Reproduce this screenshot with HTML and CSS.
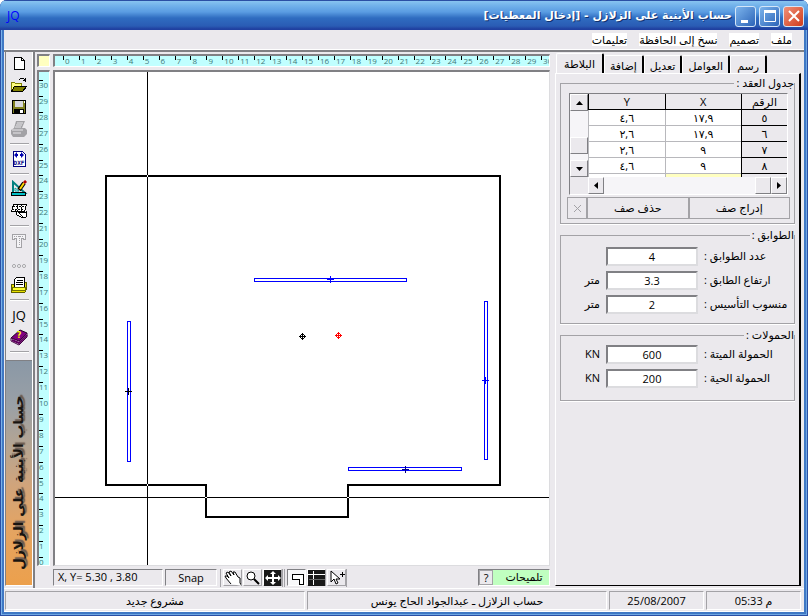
FILE: index.html
```html
<!DOCTYPE html>
<html lang="ar">
<head>
<meta charset="utf-8">
<title>حساب الأبنية على الزلازل</title>
<link rel="stylesheet" href="styles.css">
</head>
<body>
<div class="window">
  <header class="titlebar">
    <span class="app-icon">JQ</span>
    <h1 class="title" dir="rtl">حساب الأبنية على الزلازل - [إدخال المعطيات]</h1>
    <button class="win-btn" aria-label="تصغير"><svg width="20" height="20"><path d="M5 14h7v3H5z" fill="#fff"/></svg></button>
    <button class="win-btn" aria-label="تكبير"><svg width="20" height="20"><path d="M4.500 5.500h11v10h-11zM4 6.500h12" fill="none" stroke="#fff" stroke-width="1"/><path d="M4 4h12v3H4z" fill="#fff"/></svg></button>
    <button class="win-btn close" aria-label="إغلاق"><svg width="20" height="20"><path d="M5 5l10 10M15 5L5 15" stroke="#fff" stroke-width="2"/></svg></button>
  </header>
  <div class="frame">
    <nav class="menu" dir="rtl">
      <a href="#">ملف</a><a href="#">تصميم</a><a href="#">نسخ إلى الحافظة</a><a href="#">تعليمات</a>
    </nav>
    <main class="main">
      <aside class="tools">
        <button aria-label="جديد"><svg width="18" height="18" class="px"><path d="M4.500 3.500h7l3 3v9h-10z" fill="#fff" stroke="#000"/><path d="M11.500 3v3.500H15" fill="none" stroke="#000"/></svg></button>
        <button aria-label="فتح"><svg width="18" height="18" class="px"><path d="M1.500 15.500v-9h3l1 1h6v3" fill="#ffff80" stroke="#808000"/><path d="M1.500 15.500l3-5h12l-4 5z" fill="#808000" stroke="#000"/><path d="M9 3.500c2-2 5-2 6 1M13 4.500h3M15.500 2v4" fill="none" stroke="#000"/></svg></button>
        <button aria-label="حفظ"><svg width="18" height="18" class="px"><path d="M2.500 2.500h13v13h-13z" fill="#808020" stroke="#000"/><path d="M5 3h8v6H5z" fill="#d8d8dc"/><path d="M4 11h10v5H4z" fill="#000"/><path d="M10 12h3v3h-3zM14 3h1v2h-1z" fill="#fff"/></svg></button>
        <button disabled aria-label="طباعة"><svg width="18" height="18"><path d="M6 1h9l-3 7h3l2 2v4l-3 3H3l-2-3v-4l3-2z" fill="#a3a2a6"/><path d="M7 3h6M6 5h6M5 7h6M2 10h11M3 13h8" stroke="#e8e6ea"/></svg></button>
        <hr>
        <button aria-label="DXF"><svg width="18" height="18"><path class="px" d="M3.500 1.500h9l3 3v12h-12z" fill="#fff" stroke="#000080"/><path d="M4 5l3-3v2h1v2H7v2zM14 5l-3-3v2h-1v2h1v2z" fill="#0000b0"/><text x="9" y="15" class="dxf">DXF</text></svg></button>
        <hr>
        <button aria-label="رسم"><svg width="18" height="18"><path d="M3 2v11h12z" fill="none" stroke="#008080" stroke-width="2"/><path d="M5 8v3h4z" fill="#fff" stroke="#00a0a0"/><path class="px" d="M1.500 12.500h14v3h-14z" fill="#00c0c8" stroke="#000"/><path d="M9 10l5-7" stroke="#000" stroke-width="4"/><path d="M10 9l4-6" stroke="#ffd800" stroke-width="2"/><path d="M14 1l2 2" stroke="#b00000" stroke-width="3"/></svg></button>
        <button aria-label="جدول"><svg width="18" height="18" class="px"><path d="M3.500 2.500h13l-2 7h-13z" fill="#fff" stroke="#000"/><path d="M3 4.500h12M2 7.500h12M7.500 2v7M11.500 2v7" stroke="#000" stroke-dasharray="2 1"/><path d="M6 9l4 2 6-1v5l-3 1-6-3z" fill="#fff" stroke="#000"/><path d="M8 10l6 6" stroke="#000"/></svg></button>
        <hr>
        <button disabled aria-label="نص"><svg width="18" height="18" class="px"><path d="M2.500 2.500h13v5h-2v-1h-2v9h-5v-9h-2v1h-2z" fill="#f4f3f6" stroke="#a3a2a6"/><path d="M4 4.500h10M9.500 4v10" stroke="#a3a2a6" stroke-dasharray="1 1"/></svg></button>
        <button disabled aria-label="المزيد"><svg width="18" height="18"><g fill="#fff" stroke="#a3a2a6"><circle cx="4" cy="12" r="1.500"/><circle cx="9" cy="12" r="1.500"/><circle cx="14" cy="12" r="1.500"/></g></svg></button>
        <button aria-label="تقرير"><svg width="18" height="18" class="px"><path d="M1.500 8.500h3v-2h12v7l-2 3h-13z" fill="#e8e000" stroke="#606000"/><path d="M6.500 1.500h8v10h-10v-8z" fill="#fff" stroke="#000"/><path d="M7 4.500h6M6 6.500h7M6 8.500h7" stroke="#000"/><path d="M2 11.500h13v3H2z" fill="#ffff30" stroke="#707000"/></svg></button>
        <hr>
        <button class="jq">JQ</button>
        <button aria-label="مساعدة"><svg width="18" height="18"><path d="M1 10l9-8 7 3-8 8z" fill="#800080" stroke="#200020"/><path d="M1 10l8 3 8-8v4l-8 8-8-4z" fill="#fff" stroke="#400040"/><path d="M2 12l7 3 8-8" fill="none" stroke="#600060" stroke-width="2"/><text x="9" y="10" class="help">?</text></svg></button>
        <hr>
        <div class="banner"><svg width="100%" height="100%" viewBox="0 0 26 228"><text transform="translate(17 124) rotate(-90)" class="calligraphy">حساب الأبنية على الزلازل</text></svg></div>
      </aside>

      <section class="workspace">
        <div class="corner"></div>
        <div class="ruler-x"><ol>
          <li>0</li><li>1</li><li>2</li><li>3</li><li>4</li><li>5</li><li>6</li><li>7</li><li>8</li><li>9</li><li>10</li><li>11</li><li>12</li><li>13</li><li>14</li><li>15</li><li>16</li><li>17</li><li>18</li><li>19</li><li>20</li><li>21</li><li>22</li><li>23</li><li>24</li><li>25</li><li>26</li><li>27</li><li>28</li><li>29</li><li>30</li>
        </ol></div>
        <div class="ruler-y"><ol>
          <li>30</li><li>29</li><li>28</li><li>27</li><li>26</li><li>25</li><li>24</li><li>23</li><li>22</li><li>21</li><li>20</li><li>19</li><li>18</li><li>17</li><li>16</li><li>15</li><li>14</li><li>13</li><li>12</li><li>11</li><li>10</li><li>9</li><li>8</li><li>7</li><li>6</li><li>5</li><li>4</li><li>3</li><li>2</li><li>1</li><li>0</li>
        </ol></div>
        <div class="canvas">
          <svg width="100%" height="100%" class="px">
            <defs>
              <path id="plus" d="M-3 .5h7M.5-3v7"/>
              <g id="target"><path d="M-3 .5h7M.5-3v7"/><path d="M-1-2h3v1h1v3h-1v1h-3v-1h-1v-3h1zM-1-1v3h3v-3z" fill-rule="evenodd" stroke="none"/></g>
            </defs>
            <g transform="translate(-55 -72)" fill="none">
              <path d="M106 176H500V485H348V517H206V485H106z" stroke="#000" stroke-width="2"/>
              <path d="M147.500 60V580M40 497.500H570" stroke="#000"/>
              <path d="M205 497.500h2M347 497.500h2M147.500 175v2M147.500 484v2" stroke="#fff"/>
              <g stroke="#00f">
                <rect x="254.500" y="278.500" width="152" height="3"/>
                <rect x="484.500" y="301.500" width="3" height="158"/>
                <rect x="348.500" y="467.500" width="113" height="3"/>
                <rect x="127.500" y="321.500" width="3" height="140"/>
                <use href="#plus" x="330" y="279"/><use href="#plus" x="485" y="380"/>
              </g>
              <use href="#plus" x="405" y="469" stroke="#000080"/>
              <use href="#plus" x="128" y="391" stroke="#000"/>
              <use href="#target" x="302" y="336" stroke="#000" fill="#000"/>
              <use href="#target" x="338" y="335" stroke="#f00" fill="#f00"/>
            </g>
          </svg>
        </div>
        <div class="bottombar">
          <output class="coords">X, Y= 5.30 , 3.80</output>
          <button class="snap">Snap</button>
          <div class="view-tools">
            <button aria-label="تحريك"><svg width="18" height="16"><path d="M7 14L2 8l-1-2 2 0 2 2-3-5 2-1 3 4-2-4 2-1 3 4-1-3h2l3 5 2 1v5l2 3" fill="#fff" stroke="#000"/></svg></button>
            <button aria-label="تكبير الرسم"><svg width="18" height="16"><circle cx="7" cy="6" r="4" fill="#fff" stroke="#000"/><path d="M10 9l5 5" stroke="#000" stroke-width="2"/></svg></button>
            <button class="dark" aria-label="ملاءمة"><svg width="18" height="16"><path d="M9 1l3 3h-2v3h4V5l3 3-3 3V9h-4v3h2l-3 3-3-3h2V9H4v2L1 8l3-3v2h4V4H6z" fill="#fff"/></svg></button>
          </div>
          <div class="view-tools">
            <button class="pressed" aria-label="بلاطة"><svg width="18" height="16" class="px"><path d="M4.500 4.500h11v10h-4v-5h-7z" fill="#fff" stroke="#000" stroke-width="1"/></svg></button>
            <button class="dark" aria-label="شبكة"><svg width="18" height="16" class="px"><path d="M0 4.500h18M5.500 1v14" stroke="#fff"/><path d="M1 9.500h16" stroke="#666"/></svg></button>
            <button aria-label="تحديد"><svg width="18" height="16"><path d="M3 1v11l3-3 2 5 2-1-2-4h4z" fill="#fff" stroke="#000"/><path class="px" d="M12 4.500h5M14.500 2v5" stroke="#000"/></svg></button>
          </div>
          <div class="hints"><button aria-label="مساعدة">?</button><span>تلميحات</span></div>
        </div>
      </section>

      <section class="side">
        <div class="tabs" role="tablist">
          <button role="tab" class="active" aria-selected="true">البلاطة</button><button role="tab">إضافة</button><button role="tab">تعديل</button><button role="tab">العوامل</button><button role="tab">رسم</button>
        </div>
        <div class="page">
          <fieldset dir="rtl" class="nodes">
            <legend>جدول العقد :</legend>
            <div class="grid-view" dir="ltr">
              <div class="vscroll">
                <button aria-label="أعلى"><svg width="7" height="4"><path d="M0 4l3.500-4L7 4z"/></svg></button>
                <span class="track upper"></span>
                <span class="thumb"></span>
                <span class="track lower"></span>
                <button aria-label="أسفل"><svg width="7" height="4"><path d="M0 0l3.500 4L7 0z"/></svg></button>
              </div>
              <div class="rows">
                <table dir="rtl">
                  <thead><tr><th class="num">الرقم</th><th>X</th><th>Y</th></tr></thead>
                  <tbody>
                    <tr><th>٥</th><td>١٧,٩</td><td>٤,٦</td></tr>
                    <tr><th>٦</th><td>١٧,٩</td><td>٢,٦</td></tr>
                    <tr><th>٧</th><td>٩</td><td>٢,٦</td></tr>
                    <tr><th>٨</th><td>٩</td><td>٤,٦</td></tr>
                    <tr><th></th><td class="new"></td><td></td></tr>
                  </tbody>
                </table>
              </div>
              <div class="hscroll">
                <button aria-label="يسار"><svg width="4" height="7"><path d="M4 0L0 3.500 4 7z"/></svg></button>
                <span class="track"></span>
                <span class="thumb"></span>
                <button aria-label="يمين"><svg width="4" height="7"><path d="M0 0l4 3.500L0 7z"/></svg></button>
              </div>
            </div>
            <div class="actions" dir="ltr">
              <button disabled class="clear" aria-label="مسح"><svg width="9" height="9"><path d="M1 1l7 7M8 1L1 8" stroke="#a3a2a6"/></svg></button>
              <button>حذف صف</button>
              <button>إدراج صف</button>
            </div>
          </fieldset>
          <fieldset dir="rtl" class="storeys">
            <legend>الطوابق :</legend>
            <div class="field" dir="ltr"><span class="unit"></span><input id="count" value="4"><label for="count" dir="rtl">عدد الطوابق :</label></div>
            <div class="field" dir="ltr"><span class="unit">متر</span><input id="height" value="3.3"><label for="height" dir="rtl">ارتفاع الطابق :</label></div>
            <div class="field" dir="ltr"><span class="unit">متر</span><input id="level" value="2"><label for="level" dir="rtl">منسوب التأسيس :</label></div>
          </fieldset>
          <fieldset dir="rtl" class="loads">
            <legend>الحمولات :</legend>
            <div class="field" dir="ltr"><span class="unit">KN</span><input id="dead" value="600"><label for="dead" dir="rtl">الحمولة الميتة :</label></div>
            <div class="field" dir="ltr"><span class="unit">KN</span><input id="live" value="200"><label for="live" dir="rtl">الحمولة الحية :</label></div>
          </fieldset>
        </div>
      </section>
    </main>
    <footer class="status">
      <span>مشروع جديد</span><span>حساب الزلازل ـ عبدالجواد الحاج يونس</span><span class="short">25/08/2007</span><span class="short" dir="rtl">م 05:33</span>
    </footer>
  </div>
</div>
</body>
</html>
```
FILE: styles.css
```css
:root {
  --face: #ebe9ed;
  --shadow: #a3a2a6;
  --dark: #808084;
  --ui: "Open Sans", "DejaVu Sans", sans-serif;
}
* { box-sizing: border-box; }
body { margin: 0; font: 11px/14px var(--ui); color: #000; }
button, input { font: inherit; color: inherit; padding: 0; margin: 0; border-radius: 0; }
button { display: flex; align-items: center; justify-content: center; background: var(--face); border: 0; }
svg { display: block; }
.px { shape-rendering: crispEdges; }

.window {
  height: 100vh; display: flex; flex-direction: column;
  padding: 0 4px 4px; background: #3f78c4; border-radius: 7px 7px 0 0;
  box-shadow: inset 1px 0 #2b4fa4, inset -1px -1px #2b4fa4, inset 2px 0 #7ab2ea, inset -2px -2px #6ea6e2;
}
.titlebar {
  flex: none; height: 30px; margin: 0 -4px; padding: 2px 4px 0 7px;
  display: flex; align-items: center; gap: 3px; border-radius: 7px 7px 0 0;
  background: linear-gradient(#2b4fa4 0 1px, #88c4f0 1px, #70b0ea 6px, #5a9ce2 12px, #2f6cc0 18px, #2a5cb4 26px, #2040a0 29px);
}
.app-icon { flex: 1; color: #00f; font-size: 12px; }
.title {
  margin: 0; font: bold 11px/20px "DejaVu Sans", sans-serif; color: #fff;
  text-shadow: 1px 1px #10306c;
}
.win-btn {
  width: 21px; height: 21px; border: 1px solid #d4e6f8; border-radius: 3px;
  background: linear-gradient(135deg, #7cb4ec, #2c64b8);
}
.close { background: linear-gradient(135deg, #f09078, #d03c1c); }

.frame { flex: 1; min-height: 0; display: flex; flex-direction: column; background: var(--face); border-bottom: 1px solid #fff; }
.menu { flex: none; display: flex; align-items: center; gap: 12px; height: 20px; padding: 0 12px; border-bottom: 1px solid #fff; }
.menu a { color: #000; background: #fff; text-decoration: none; line-height: 13px; }
.main { flex: 1; min-height: 0; display: flex; border-top: 2px solid var(--dark); border-bottom: 1px solid #fff; }

.tools {
  flex: none; width: 28px; margin: 0 1px 2px 1px; display: flex; flex-direction: column;
  border-left: 1px solid var(--dark); border-right: 1px solid #fff; border-bottom: 1px solid #fff;
}
.tools button { flex: none; height: 22px; background: none; }
.tools hr { flex: none; width: 19px; height: 2px; margin: 3px auto; border: 0; border-top: 1px solid var(--shadow); border-bottom: 1px solid #fff; }
.tools .jq { font-size: 13px; }
.dxf { font: bold 6px "DejaVu Sans Mono", monospace; fill: #000080; text-anchor: middle; }
.help { font: bold 8px "DejaVu Sans", sans-serif; fill: #ff0; text-anchor: middle; }
.banner {
  flex: 1; min-height: 0; margin-top: 4px; border-top: 1px solid var(--dark);
  background: linear-gradient(#8a98a6, #9aa0a6 20%, #b8a590 40%, #d0a47c 55%, #e4a462 75%, #eca04c);
}
.calligraphy { font: bold 14px "DejaVu Sans", sans-serif; fill: #181410; text-anchor: middle; direction: rtl; text-shadow: 2px 2px 1px #6a5a50; }

.workspace {
  flex: 1; min-width: 0; padding: 2px 2px 1px 2px; margin-left: -1px;
  display: grid; grid-template: 13px minmax(0, 1fr) 18px / 13px minmax(0, 1fr); gap: 3px;
  border-left: 2px solid var(--dark);
}
.corner, .ruler-x, .ruler-y, .canvas {
  overflow: hidden; border: 2px solid; border-color: var(--dark) #fff #fff var(--dark); background: #c0ffff;
}
.corner, .ruler-x, .ruler-y { border-width: 2px 1px 1px 2px; }
.corner { background: #ffffc0; }
.canvas { border-width: 2px 1px 1px 2px; border-right-color: #dcdcdf; border-bottom-color: #dcdcdf; background: #fff; }
ol { list-style: none; margin: 0; padding: 0; display: grid; color: #407878; font-size: 8px; line-height: 9px; }
.ruler-x ol { grid-template-columns: repeat(31, minmax(0, 1fr)); margin: 0 -8px 0 8px; }
.ruler-y ol { grid-template-rows: repeat(31, minmax(0, 1fr)); height: 100%; margin-top: 8px; }
.ruler-x li { position: relative; padding-left: 2px; }
.ruler-x li::before { content: ""; position: absolute; left: 0; top: 0; width: 1px; height: 4px; background: #000; }
.ruler-y li { position: relative; }
.ruler-y li::before { content: ""; position: absolute; left: 0; top: 0; width: 4px; height: 1px; background: #000; }

.bottombar { grid-column: 2; display: flex; }
.coords, .snap, .hints { height: 17px; border: 1px solid; border-color: var(--dark) #fff #fff var(--dark); }
.coords { width: 110px; padding-left: 4px; margin-right: 2px; }
.snap { width: 52px; margin-right: 3px; }
.view-tools { display: flex; gap: 1px; padding-left: 2px; margin-right: 1px; border-left: 1px solid var(--shadow); border-right: 1px solid var(--shadow); }
.view-tools button { width: 19px; height: 17px; border: 1px solid; border-color: #fff var(--shadow) var(--shadow) #fff; }
.view-tools .dark svg { background: #181818; }
.view-tools .pressed { background: #f8f8fa; border-color: var(--dark) #fff #fff var(--dark); }
.hints { flex: none; width: 72px; margin-left: auto; display: flex; background: #c0ffc0; }
.hints button { width: 14px; border: 1px solid; border-color: #fff var(--dark) var(--dark) #fff; outline: 1px solid var(--shadow); outline-offset: -1px; }
.hints span { flex: 1; text-align: center; padding-left: 6px; }

.side { flex: none; width: 252px; padding: 1px 3px 2px 3px; display: flex; flex-direction: column; }
.tabs { flex: none; height: 20px; padding-left: 1px; display: flex; align-items: flex-end; }
.tabs button { height: 18px; padding: 3px 5px 0; min-width: 37px; border-left: 1px solid #fff; border-top: 1px solid #fff; border-right: 2px solid #000; border-radius: 2px 2px 0 0; }
.tabs .active { height: 20px; padding: 1px 7px 0; }
.page { flex: 1; padding: 2px 4px 0 4px; border: 1px solid; border-color: #fff #000 #000 #fff; border-right-width: 2px; }
fieldset { min-width: 0; margin: 0 0 4px; padding: 0 0 0 8px; border: 1px solid var(--shadow); box-shadow: 0 1px #fff; }
legend { padding: 0 0 0 2px; line-height: 14px; }
.nodes { height: 148px; }
.grid-view {
  display: grid; grid-template: 83px 17px / 18px minmax(0, 1fr);
  width: 219px; margin: 3px auto 0 0; border: 1px solid; border-color: var(--dark) #fff #fff var(--dark);
}
.vscroll { display: flex; flex-direction: column; }
.track { background: #f6f5f8; }
.upper { height: 26px; }
.lower { flex: 1; }
.vscroll button, .hscroll button, .thumb { flex: none; width: 18px; height: 17px; background: var(--face); border: 1px solid; border-color: #fff var(--dark) var(--dark) #fff; }
.rows { overflow: hidden; }
.hscroll { grid-column: 2; display: flex; }
.hscroll button, .hscroll .thumb { width: 16px; }
.hscroll .track { flex: 1; }
table { width: 100%; table-layout: fixed; border-collapse: separate; border-spacing: 0; background: #fff; }
th, td { height: 16px; padding: 0; font-weight: normal; text-align: center; line-height: 14px; border-bottom: 1px solid #b8b8bc; border-left: 1px solid #b8b8bc; }
th { background: var(--face); border-color: #000; }
.num { width: 46px; }
.new { background: #ffffc0; }
.actions { display: flex; width: 223px; margin: 2px auto 0 -2px; }
.actions button { flex: 1; height: 22px; border: 1px solid; border-color: #fff var(--dark) var(--dark) #fff; outline: 1px solid var(--shadow); outline-offset: -1px; }
.actions .clear { flex: none; width: 20px; }
.storeys { height: 96px; padding-top: 2px; }
.loads { height: 73px; }
.field { display: grid; grid-template-columns: 31px 92px 1fr; column-gap: 6px; align-items: center; height: 24px; }
.field .unit { text-align: right; }
.field label { white-space: nowrap; text-align: right; justify-self: start; }
.field input { width: 92px; height: 19px; text-align: center; background: #fff; border: 2px solid; border-color: var(--dark) #dcdcdf #dcdcdf var(--dark); }

.status { flex: none; display: flex; gap: 2px; padding: 2px 3px 1px 1px; }
.status span { flex: 1; height: 19px; text-align: center; line-height: 17px; border: 1px solid; border-color: var(--shadow) #fff #fff var(--shadow); }
.status .short { flex: none; width: 95px; }
```
